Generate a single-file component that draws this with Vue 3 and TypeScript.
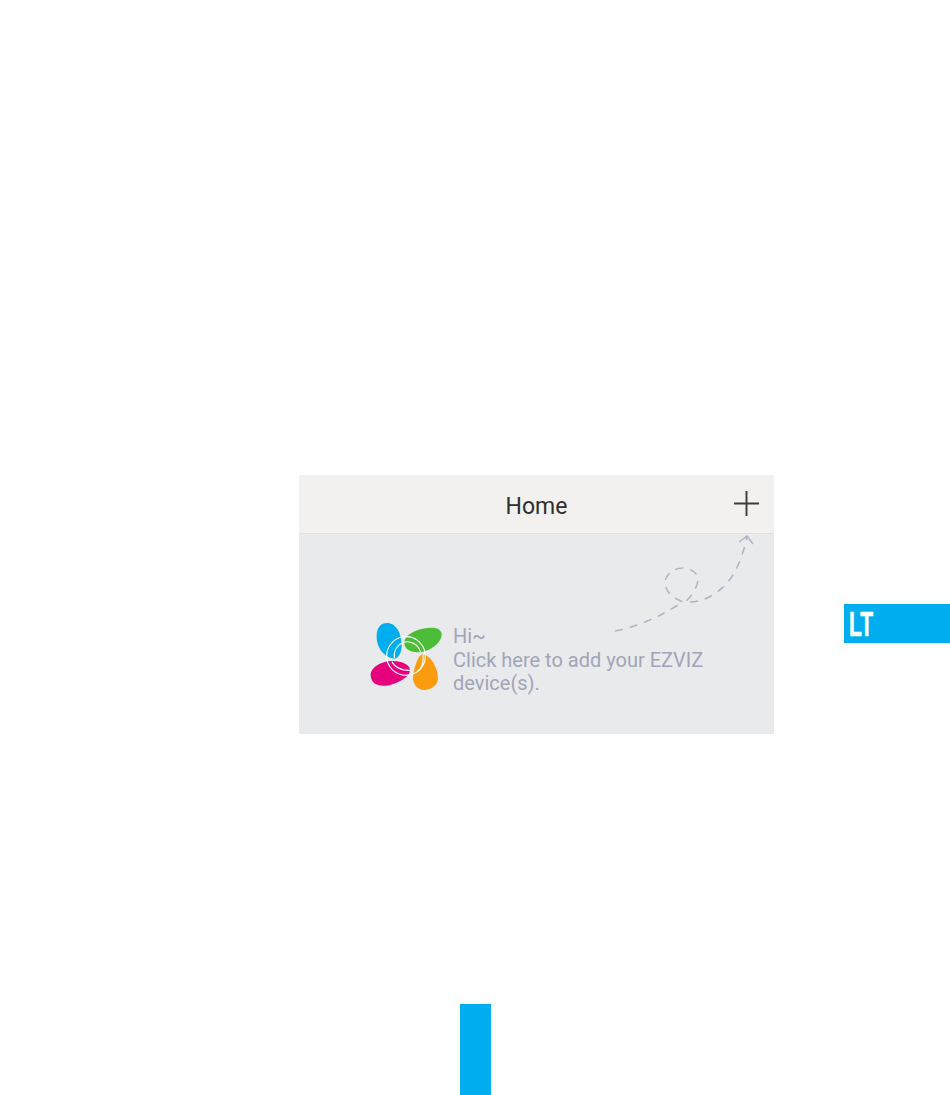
<template>
  <div class="page">
    <div class="row">
      <section class="screen">
        <header class="topbar">
          <span class="title">Home</span>
          <svg class="plus" viewBox="0 0 28 28" aria-hidden="true">
            <path d="M14 1v26M1 14h26" />
          </svg>
        </header>
        <div class="content">
          <svg class="logo" viewBox="0 0 270 255" aria-hidden="true">
            <path fill="#00aeef" d="M78 24C105 24 122 55 122 90C122 110 114 131 100 131C68 128 45 95 47 60C48 38 60 24 78 24Z" />
            <path fill="#4dbd38" d="M130 85C130 55 175 38 215 38C235 38 243 50 242 60C240 85 205 112 170 112C150 112 130 103 130 85Z" />
            <path fill="#e6007e" d="M29 180C29 158 60 138 95 138C125 138 147 150 147 165C147 187 112 202 90 209C68 216 29 214 29 180Z" />
            <path fill="#fa9c0e" d="M183 118C210 120 231 160 231 190C231 212 208 226 190 225C168 224 155 205 156 188C158 165 168 125 183 118Z" />
            <g fill="none" stroke="#fff" stroke-width="3.5">
              <circle cx="135" cy="123" r="58" />
              <path d="M100 130C98 105 110 88 128 82C148 76 172 88 178 110" />
              <path d="M93 140C100 155 122 168 147 166" />
              <path d="M186 118C188 140 182 158 172 168" />
            </g>
          </svg>
          <p class="hint">Hi~<br />Click here to add your EZVIZ device(s).</p>
          <svg class="trail" viewBox="0 0 180 160" aria-hidden="true">
            <path class="dash" d="M15 151C45 145 65 133 83 122C72 118 65 111 65 102C66 93 75 88 83 88C92 89 98 93 98 100C97 108 92 116 85 122C105 123 122 112 133 95C140 83 144 70 147 57" />
            <path class="head" d="M139 62L147 56L153 64" />
          </svg>
        </div>
      </section>
      <div class="lang-tab"><span>LT</span></div>
    </div>
    <div class="footer-bar"></div>
  </div>
</template>

<script setup lang="ts">
</script>

<style>
html,
body {
  background: #fff;
}
</style>

<style scoped>
.page {
  width: 950px;
  height: 1095px;
  padding-top: 475px;
  box-sizing: border-box;
  overflow: hidden;
  font-family: Roboto, "Liberation Sans", sans-serif;
}

.row {
  display: flex;
  align-items: flex-start;
  padding-left: 299px;
}

.screen {
  position: relative;
  width: 475px;
  height: 259px;
  background: #e9eaec;
  flex: none;
}

.topbar {
  position: relative;
  height: 59px;
  box-sizing: border-box;
  padding-top: 4px;
  background: #f2f1ef;
  border-bottom: 1px solid #dfdfdf;
  display: flex;
  align-items: center;
  justify-content: center;
}

.title {
  font-size: 23px;
  color: #2f2f2f;
}

.plus {
  position: absolute;
  right: 14px;
  top: 15px;
  width: 27px;
  height: 27px;
}

.plus path {
  fill: none;
  stroke: #3c3c3c;
  stroke-width: 2;
}

.content {
  display: flex;
  align-items: flex-start;
  padding: 81px 0 0 62px;
}

.logo {
  width: 90px;
  height: 85px;
  flex: none;
}

.hint {
  margin: 10px 0 0 2px;
  width: 262px;
  font-size: 20px;
  line-height: 23.5px;
  color: #a1a5b8;
}

.trail {
  position: absolute;
  left: 301px;
  top: 5px;
  width: 180px;
  height: 160px;
}

.trail path {
  fill: none;
  stroke: #b0b3c4;
  stroke-width: 1.5;
}

.trail .dash {
  stroke-dasharray: 8 7;
}

.lang-tab {
  margin: 129px 0 0 70px;
  width: 106px;
  height: 39px;
  flex: none;
  background: #00aeef;
  color: #fff;
}

.lang-tab span {
  display: block;
  width: 60px;
  margin-left: 5px;
  font-family: "Liberation Sans Narrow", "Liberation Sans", sans-serif;
  font-weight: 700;
  font-size: 35px;
  line-height: 40px;
  -webkit-text-stroke: 0.7px #fff;
  transform: scaleX(0.6);
  transform-origin: left center;
}

.footer-bar {
  width: 31px;
  height: 91px;
  margin: 270px 0 0 460px;
  background: #00aeef;
}
</style>
